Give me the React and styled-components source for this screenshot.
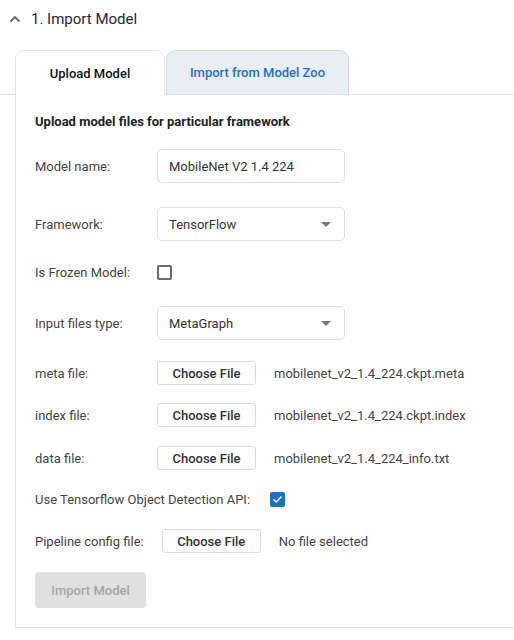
import React from "react";
import styled, { createGlobalStyle } from "styled-components";

const Global = createGlobalStyle`
  html, body { margin: 0; padding: 0; background: #fff; }
  body { font-family: Roboto, "Noto Sans", "Liberation Sans", sans-serif; color: #333; overflow: hidden; }
  * { box-sizing: border-box; }
`;

const Page = styled.div`
  width: 514px;
  height: 640px;
  overflow: hidden;
`;

const SectionHeader = styled.div`
  display: flex;
  align-items: center;
  height: 38px;
  padding-left: 9px;
  gap: 10px;
  font-size: 15px;
  color: #1d2a3a;
`;

const Chevron = styled.svg`
  width: 12px;
  height: 8px;
  flex: none;
`;

const TabBar = styled.div`
  display: flex;
  margin-top: 12px;
  padding-left: 15px;
  height: 45px;
  border-bottom: 1px solid #dfe3e7;
`;

const Tab = styled.div`
  display: flex;
  align-items: center;
  justify-content: center;
  width: ${(p) => p.$w}px;
  height: ${(p) => (p.$active ? 45 : 44)}px;
  border: 1px solid ${(p) => (p.$active ? "#dfe3e7" : "#d3d9de")};
  border-bottom: none;
  border-radius: 9px 9px 0 0;
  background: ${(p) => (p.$active ? "#fff" : "#e9eef2")};
  color: ${(p) => (p.$active ? "#111" : "#1a72c5")};
  font-size: 13px;
  font-weight: 500;
  margin-right: 1px;
  position: relative;
  z-index: 1;
  ${(p) => (p.$active ? "margin-bottom: -1px;" : "")}
`;

const Panel = styled.div`
  margin-left: 15px;
  border-left: 1px solid #dfe3e7;
  border-bottom: 1px solid #dfe3e7;
  padding: 19px 0 18px 19px;
  height: 533px;
`;

const Heading = styled.div`
  font-size: 13px;
  font-weight: 700;
  color: #222;
  line-height: 16px;
  margin-bottom: 19px;
`;

const Row = styled.div`
  display: flex;
  align-items: center;
  height: ${(p) => p.$h}px;
  margin-bottom: ${(p) => p.$mb}px;
  font-size: 13px;
  color: #444;
`;

const Label = styled.span`
  min-width: 104px;
  margin-right: ${(p) => p.$mr ?? 18}px;
  white-space: nowrap;
`;

const TextBox = styled.div`
  width: 188px;
  height: 34px;
  border: 1px solid #dcdfe3;
  border-radius: 5px;
  display: flex;
  align-items: center;
  padding: 0 11px;
  font-size: 13px;
  color: #333;
  justify-content: space-between;
`;

const Caret = styled.span`
  width: 0;
  height: 0;
  border-left: 5px solid transparent;
  border-right: 5px solid transparent;
  border-top: 5px solid #777;
  margin-right: 2px;
`;

const Box = styled.span`
  width: 15px;
  height: 15px;
  border-radius: 2px;
  border: ${(p) => (p.$checked ? "none" : "2px solid #6b6b6b")};
  background: ${(p) => (p.$checked ? "#1673c8" : "#fff")};
  display: inline-flex;
  align-items: center;
  justify-content: center;
  margin-left: ${(p) => p.$ml || 0}px;
`;

const FileButton = styled.div`
  width: 99px;
  height: 24px;
  border: 1px solid #d8dbdf;
  border-radius: 3px;
  display: flex;
  align-items: center;
  justify-content: center;
  font-size: 13px;
  font-weight: 500;
  color: #333;
  margin-right: 18px;
`;

const FileName = styled.span`
  color: #444;
`;

const SubmitButton = styled.div`
  width: 111px;
  height: 36px;
  border-radius: 4px;
  background: #e0e0e0;
  color: #a6a6a6;
  font-size: 13px;
  font-weight: 500;
  display: flex;
  align-items: center;
  justify-content: center;
`;

export default function App() {
  return (
    <Page>
      <Global />
      <SectionHeader>
        <Chevron viewBox="0 0 12 8">
          <path d="M1.5 6.5 L6 2 L10.5 6.5" fill="none" stroke="#666" strokeWidth="1.8" />
        </Chevron>
        <span>1. Import Model</span>
      </SectionHeader>
      <TabBar>
        <Tab $active $w={150}>Upload Model</Tab>
        <Tab $w={183}>Import from Model Zoo</Tab>
      </TabBar>
      <Panel>
        <Heading>Upload model files for particular framework</Heading>
        <Row $h={34} $mb={24}>
          <Label>Model name:</Label>
          <TextBox>MobileNet V2 1.4 224</TextBox>
        </Row>
        <Row $h={34} $mb={19}>
          <Label>Framework:</Label>
          <TextBox>
            TensorFlow
            <Caret />
          </TextBox>
        </Row>
        <Row $h={24} $mb={22}>
          <Label>Is Frozen Model:</Label>
          <Box />
        </Row>
        <Row $h={34} $mb={21}>
          <Label>Input files type:</Label>
          <TextBox>
            MetaGraph
            <Caret />
          </TextBox>
        </Row>
        <Row $h={24} $mb={18}>
          <Label>meta file:</Label>
          <FileButton>Choose File</FileButton>
          <FileName>mobilenet_v2_1.4_224.ckpt.meta</FileName>
        </Row>
        <Row $h={24} $mb={19}>
          <Label>index file:</Label>
          <FileButton>Choose File</FileButton>
          <FileName>mobilenet_v2_1.4_224.ckpt.index</FileName>
        </Row>
        <Row $h={24} $mb={17}>
          <Label>data file:</Label>
          <FileButton>Choose File</FileButton>
          <FileName>mobilenet_v2_1.4_224_info.txt</FileName>
        </Row>
        <Row $h={24} $mb={18}>
          <Label $mr={20}>Use Tensorflow Object Detection API:</Label>
          <Box $checked>
            <svg width="11" height="9" viewBox="0 0 11 9">
              <path d="M1.5 4.5 L4.2 7 L9.5 1.5" fill="none" stroke="#fff" strokeWidth="1.5" />
            </svg>
          </Box>
        </Row>
        <Row $h={24} $mb={19}>
          <Label>Pipeline config file:</Label>
          <FileButton>Choose File</FileButton>
          <FileName>No file selected</FileName>
        </Row>
        <SubmitButton>Import Model</SubmitButton>
      </Panel>
    </Page>
  );
}
